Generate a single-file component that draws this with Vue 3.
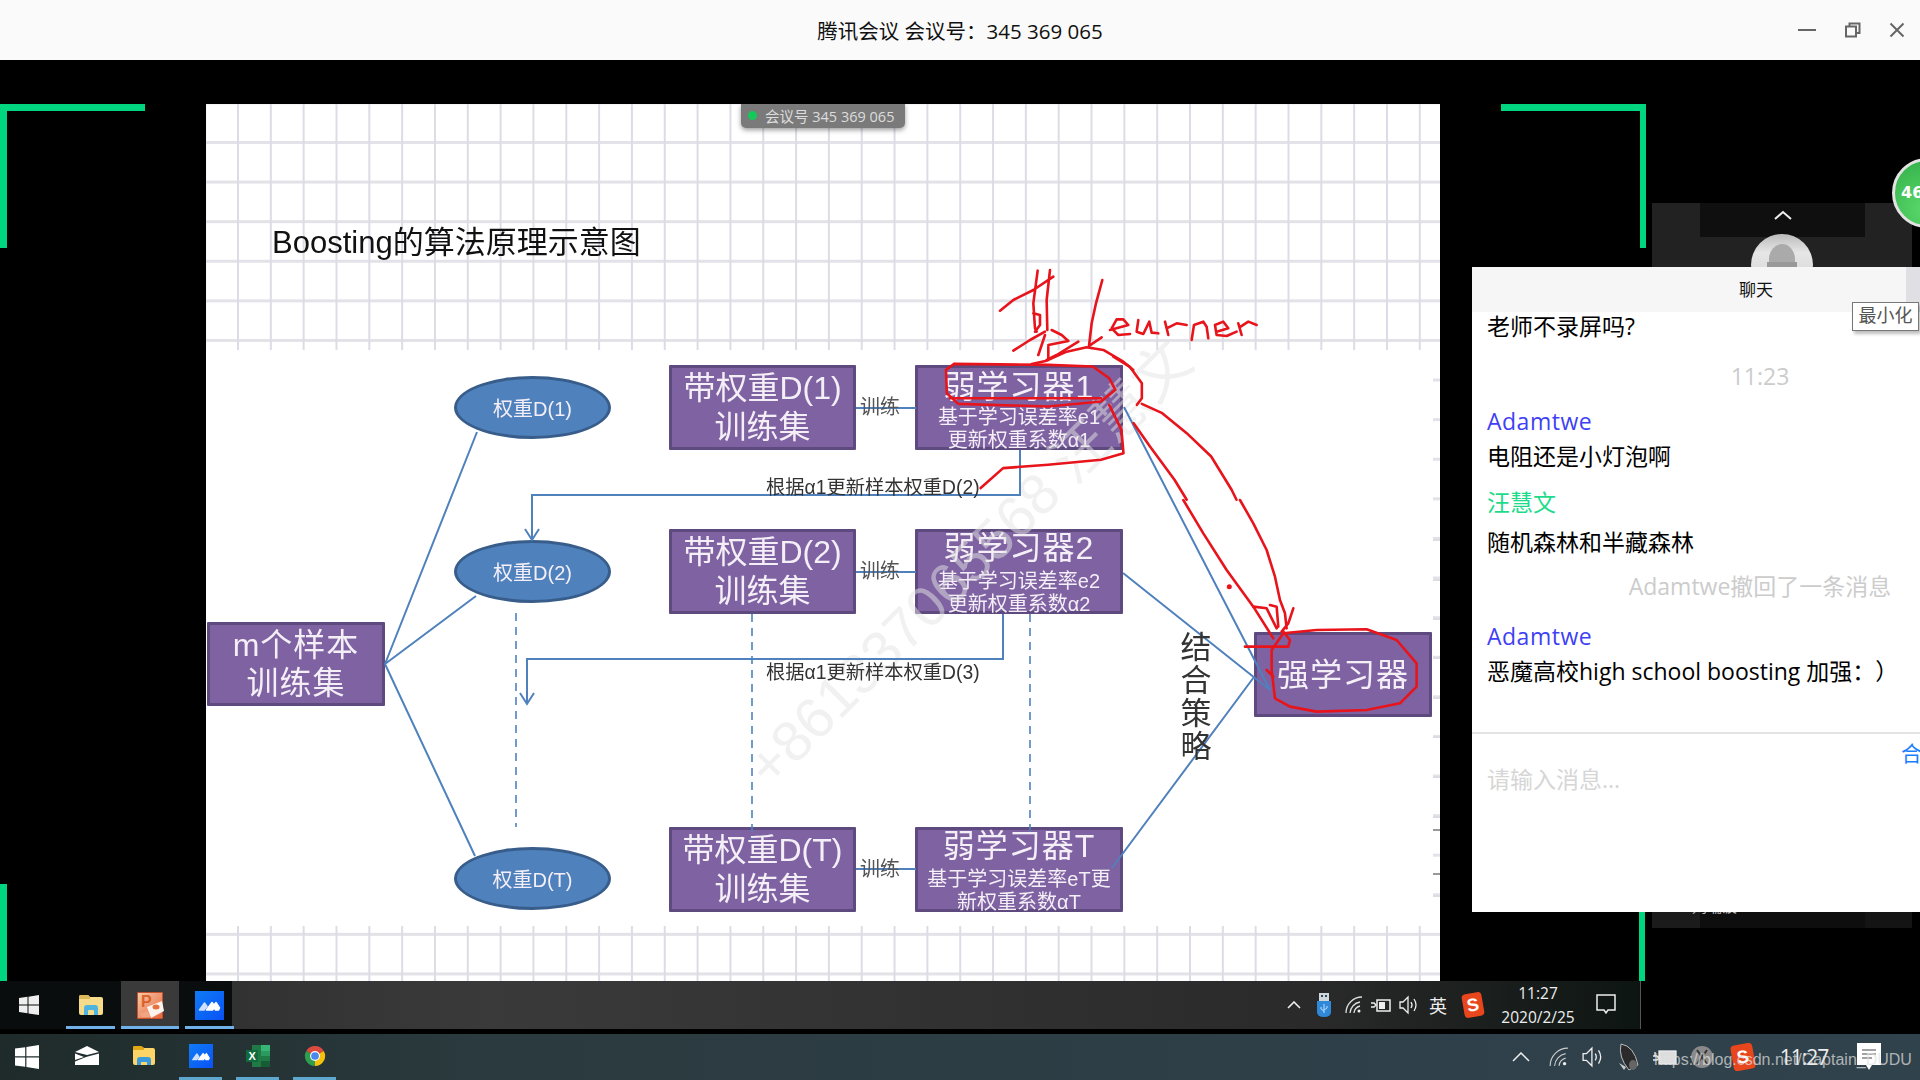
<template>
  <div class="screen">
    <header class="titlebar">
      <span class="title">腾讯会议 会议号：345 369 065</span>
      <div class="win-btns">
        <svg width="20" height="16" viewBox="0 0 20 16"><path d="M1 8h18" stroke="#666" stroke-width="2" /></svg>
        <svg width="16" height="16" viewBox="0 0 16 16" fill="none" stroke="#666" stroke-width="2"><rect x="1" y="4.500" width="10" height="10" /><path d="M4.500 4V1.500H14.500V11H11.500" /></svg>
        <svg width="16" height="16" viewBox="0 0 16 16"><path d="M1.500 1.500l13 13M14.500 1.500l-13 13" stroke="#666" stroke-width="2" /></svg>
      </div>
    </header>

    <main class="stage">
      <div class="bracket tl"></div>
      <div class="bracket tr"></div>
      <div class="edge bl"></div>
      <div class="edge br"></div>

      <section class="slide">
        <h1 class="slide-title">Boosting的算法原理示意图</h1>
        <div class="diagram-bg"></div>

        <div class="node box box-m"><span>m个样本</span><span>训练集</span></div>
        <div v-for="n in ellipses" :key="n.cls" class="node ellipse" :class="n.cls">{{ n.text }}</div>
        <div v-for="r in rows" :key="r.cls" class="node box box-set" :class="r.cls">
          <span>{{ r.set }}</span><span>训练集</span>
        </div>
        <div v-for="r in rows" :key="r.cls + 'w'" class="node box box-weak" :class="[r.cls, r.up ? 'up' : '']">
          <div class="weak-title">{{ r.weak }}</div>
          <div class="weak-sub">{{ r.sub1 }}</div>
          <div class="weak-sub">{{ r.sub2 }}</div>
        </div>
        <div class="node box box-strong">强学习器</div>

        <div class="watermark">+861337065568 汪慧文</div>

        <svg class="wires" width="1234" height="877" viewBox="206 104 1234 877" fill="none">
          <g stroke="#4f81bd" stroke-width="2">
            <path d="M385 664L477 432M385 664L476 596M385 664L475 856" />
            <path d="M856 408H916M856 572H916M856 869H916" />
            <path d="M1020 450V495H532V539M525 529L532 540L539 529" />
            <path d="M1003 614V659H527V704M520 693L527 704L534 693" />
            <path d="M1124 407L1270 690M1123 573L1270 690M1112 868L1254 677" />
            <path d="M516 613V827M752 614V840M1030 614V835" stroke-width="1.600" stroke-dasharray="8 6" />
          </g>
          <circle cx="1229.300" cy="586.700" r="2.500" fill="#e8141c" />
          <g stroke="#e8141c" stroke-width="2.600" stroke-linejoin="round" stroke-linecap="round">
            <!-- 基 + Learner handwriting -->
            <g transform="translate(990 260) scale(.3333)">
              <path vector-effect="non-scaling-stroke" d="M143 32L130 130L135 205L140 215M180 30L170 120L172 210M30 152L70 120L130 90L190 50M130 160L150 165L150 195L135 215M70 272L120 240L165 215M165 225L145 285M185 210L215 225L235 243L175 255M265 245L200 285L170 300M175 260L175 300" />
              <path vector-effect="non-scaling-stroke" d="M125 312L170 302L230 275L290 262L340 270L400 305L430 330" />
              <path vector-effect="non-scaling-stroke" d="M337 60L318 130L305 190L297 258L335 232" />
              <path vector-effect="non-scaling-stroke" d="M360 210L415 195L400 178L380 178L365 205L385 225L420 222M445 180L440 215L460 222L478 185L485 218L505 220M525 185L535 225M530 205L560 190L590 195M605 240L612 195L640 185L650 200L655 235M680 215L715 205L700 185L675 195L680 225L710 228L740 215M745 190L755 225M752 200L775 185L800 195" />
            </g>
            <!-- loop round 弱学习器1 and the two long strokes -->
            <g transform="translate(640 250) scale(.408 .333)">
              <path vector-effect="non-scaling-stroke" d="M770 342L1000 345L1110 350L1150 385L1165 420L1130 455L1000 470L780 462L752 430L750 360L770 342M760 445L1130 445" />
              <path vector-effect="non-scaling-stroke" d="M1150 465L1180 540L1185 610L1130 630L1000 645L890 655L835 715" />
              <path vector-effect="non-scaling-stroke" d="M1160 320L1200 350L1230 400L1230 445L1218 465" />
              <path vector-effect="non-scaling-stroke" d="M1230 462L1280 490L1340 550L1400 620L1450 720L1462 750" />
              <path vector-effect="non-scaling-stroke" d="M1210 520L1250 590L1310 690L1340 750" />
            </g>
            <g transform="translate(1000 500) scale(.3333)">
              <path vector-effect="non-scaling-stroke" d="M720 0L760 70L800 150L825 230L840 300L855 340L860 385M880 325L865 370L845 395M810 315L830 320L835 380M760 320L800 325L830 385" />
              <path vector-effect="non-scaling-stroke" d="M550 0L610 100L680 210L760 320L820 415M735 440L865 440L870 420L850 395" />
              <path vector-effect="non-scaling-stroke" d="M850 400L950 390L1100 388L1190 420L1250 490L1250 560L1200 610L1100 630L950 635L870 620L825 595L815 510L815 450L850 400M800 510L820 530" />
            </g>
          </g>
        </svg>

        <span class="label train t1">训练</span>
        <span class="label train t2">训练</span>
        <span class="label train t3">训练</span>
        <span class="label update u1">根据α1更新样本权重D(2)</span>
        <span class="label update u2">根据α1更新样本权重D(3)</span>
        <span class="label strategy">结合策略</span>
        <div class="ticks">
          <i v-for="t in ticks" :key="t" :class="{ dark: t > 820 && t < 880 }" :style="{ top: t - 350 + 'px' }"></i>
        </div>
      </section>

      <div class="meeting-tag"><i></i>会议号 345 369 065</div>

      <aside class="thumbs">
        <div class="thumb-head">
          <svg width="18" height="10" viewBox="0 0 18 10" fill="none"><path d="M1 9l8-7 8 7" stroke="#eee" stroke-width="2" /></svg>
        </div>
        <div class="avatar"><span class="avatar-head"></span><span class="avatar-body"></span></div>
        <div class="thumb-foot">
          <svg width="16" height="16" viewBox="0 0 16 16" fill="none"><circle cx="8" cy="8" r="6" stroke="#bbb" stroke-width="2" /><path d="M2 14L14 3" stroke="#d33" stroke-width="2" /></svg>
          <span>刘瑞波</span>
        </div>
      </aside>

      <div class="badge"><span>46</span></div>

      <section class="chat">
        <div class="chat-head">
          <span>聊天</span>
          <i class="chat-side"></i>
          <div class="tip">最小化</div>
        </div>
        <div class="chat-body">
          <div
            v-for="(m, i) in messages"
            :key="i"
            class="msg"
            :class="m.kind"
            :style="{ marginTop: m.gap + 'px' }"
          >{{ m.text }}</div>
        </div>
        <div class="chat-input">
          <span class="collapse">合</span>
          <span class="placeholder">请输入消息...</span>
        </div>
      </section>
    </main>

    <footer class="bar-inner">
      <div class="inner-apps">
        <div class="slot start">
          <svg width="20" height="20" viewBox="0 0 20 20" fill="#eee"><path d="M0 3l8.500-1.200v7.600H0zM9.500 1.700L20 0v9.400H9.500zM0 10.500h8.500v7.700L0 17zM9.500 10.500H20V20L9.500 18.400z" /></svg>
        </div>
        <div class="slot lit">
          <svg width="26" height="22" viewBox="0 0 26 22"><path d="M1 3q0-2 2-2h7l2 2h11q2 0 2 2v14q0 2-2 2H3q-2 0-2-2z" fill="#f6dc8a" /><path d="M1 3q0-2 2-2h7l2 2v2H1z" fill="#dcb858" /><path d="M6 21v-7q0-3 3-3h8q3 0 3 3v7h-4v-4q0-1-1-1h-4q-1 0-1 1v4z" fill="#4fb3e0" /></svg>
        </div>
        <div class="slot lit active">
          <svg width="27" height="27" viewBox="0 0 27 27"><defs><linearGradient id="pp" x1="0" y1="0" x2="1" y2="1"><stop offset="0" stop-color="#f7c9a8" /><stop offset="1" stop-color="#e8663a" /></linearGradient></defs><rect width="26" height="27" rx="1" fill="#c9502c" /><rect x="1" y="1" width="24" height="25" fill="url(#pp)" /><text x="4" y="15" class="ppt-p">P</text><path d="M10 15l15-6 2 10-13 7z" fill="#fbf3ee" /><ellipse cx="19" cy="15" rx="3.500" ry="2.500" fill="#e8703f" /><path d="M3 22l7-3 4 6H5z" fill="#f0a583" /></svg>
        </div>
        <div class="slot lit">
          <svg width="29" height="29" viewBox="0 0 29 29"><defs><linearGradient id="mg1" x1="0" y1="0" x2="1" y2="1"><stop offset="0" stop-color="#0f7cf5" /><stop offset="1" stop-color="#0a52f5" /></linearGradient></defs><rect width="29" height="29" fill="url(#mg1)" /><path d="M4.500 19l5-7 2.500 3.500-3 3.500z" fill="#cfe0ff" stroke="#cfe0ff" stroke-width="1.500" stroke-linejoin="round" /><path d="M11.500 19l5.500-7.500 2 2.500 2-2.500 3.500 5.500-1 2h-3l-1.500-2.500-1.500 2.500z" fill="#fff" stroke="#fff" stroke-width="1.500" stroke-linejoin="round" /></svg>
        </div>
      </div>
      <div class="inner-tray">
        <svg width="14" height="8" viewBox="0 0 14 8" fill="none"><path d="M1 7l6-6 6 6" stroke="#eee" stroke-width="1.600" /></svg>
        <svg width="16" height="24" viewBox="0 0 16 24"><rect x="3" y="0" width="10" height="8" fill="#cfd8dc" /><rect x="5" y="2" width="2" height="2" fill="#345" /><rect x="9" y="2" width="2" height="2" fill="#345" /><path d="M1 8h14v11q0 5-7 5t-7-5z" fill="#2f88d8" /><path d="M8 11v9M5 14v2l3 2M11 13v2l-3 2" stroke="#bfe0ff" fill="none" /></svg>
        <svg width="18" height="18" viewBox="0 0 18 18" fill="none" stroke="#ddd" stroke-width="1.300"><path d="M1 17A16 16 0 0 1 17 1M5 17A12 12 0 0 1 15 6M9 17a8 8 0 0 1 6-7" /><circle cx="14" cy="15" r="1.500" fill="#eee" stroke="none" /></svg>
        <svg width="20" height="16" viewBox="0 0 20 16" fill="none" stroke="#eee" stroke-width="1.500"><rect x="6" y="3" width="13" height="11" /><rect x="8" y="5" width="6" height="7" fill="#eee" stroke="none" /><path d="M0 6h3l2 2-2 2H0" /></svg>
        <svg width="20" height="20" viewBox="0 0 20 20" fill="none" stroke="#eee" stroke-width="1.300"><path d="M1 7v6h3l5 5V2L4 7z" /><path d="M12 7q2 3 0 6M15 4q4 6 0 12" /></svg>
        <span class="ime">英</span>
        <div class="sogou"><span>S</span></div>
        <div class="clock"><span>11:27</span><span>2020/2/25</span></div>
        <svg width="20" height="22" viewBox="0 0 20 22" fill="none" stroke="#eee" stroke-width="1.500"><path d="M1 1h18v15h-7l-2 3-2-3H1z" /></svg>
      </div>
    </footer>
    <div class="bar-gap"></div>
    <footer class="bar-host">
      <div class="host-apps">
        <div class="slot start">
          <svg width="24" height="24" viewBox="0 0 20 20" fill="#fff"><path d="M0 3l8.500-1.200v7.600H0zM9.500 1.700L20 0v9.400H9.500zM0 10.500h8.500v7.700L0 17zM9.500 10.500H20V20L9.500 18.400z" /></svg>
        </div>
        <div class="slot">
          <svg width="24" height="19" viewBox="0 0 24 19" fill="#fff"><path d="M0 6L12 0l12 6-12 3z" /><path d="M0 7.500L9 11 0 14zM24 7.500V19H0v-3.500l11-4.500z" /></svg>
        </div>
        <div class="slot">
          <svg width="22" height="19" viewBox="0 0 22 19"><path d="M0 2q0-2 2-2h6l3 2h9q2 0 2 2v13q0 2-2 2H2q-2 0-2-2z" fill="#fcd566" /><path d="M0 2q0-2 2-2h6l3 2v2H0z" fill="#e2a813" /><path d="M4 19v-5q0-3 3-3h8q3 0 3 3v5h-4v-3h-6v3z" fill="#3c9bdc" /></svg>
        </div>
        <div class="slot on">
          <svg width="24" height="24" viewBox="0 0 29 29"><defs><linearGradient id="mg2" x1="0" y1="0" x2="1" y2="1"><stop offset="0" stop-color="#0f7cf5" /><stop offset="1" stop-color="#0a52f5" /></linearGradient></defs><rect width="29" height="29" fill="url(#mg2)" /><path d="M4.500 19l5-7 2.500 3.500-3 3.500z" fill="#cfe0ff" stroke="#cfe0ff" stroke-width="1.500" stroke-linejoin="round" /><path d="M11.500 19l5.500-7.500 2 2.500 2-2.500 3.500 5.500-1 2h-3l-1.500-2.500-1.500 2.500z" fill="#fff" stroke="#fff" stroke-width="1.500" stroke-linejoin="round" /></svg>
        </div>
        <div class="slot on">
          <svg width="24" height="22" viewBox="0 0 24 22"><rect x="6" y="0" width="18" height="22" fill="#1f7a45" /><rect x="15" y="0" width="9" height="6" fill="#37b574" /><rect x="15" y="6" width="9" height="5" fill="#2a9a5e" /><rect x="15" y="16" width="9" height="6" fill="#185c36" /><rect x="0" y="5" width="12" height="12" fill="#0f6b3c" /><text x="2.500" y="15" class="xls-x">X</text></svg>
        </div>
        <div class="slot on">
          <svg width="22" height="22" viewBox="0 0 24 24"><path d="M12 12L2.470 6.500A11 11 0 0 1 21.530 6.500z" fill="#dd4b3e" /><path d="M12 12L21.530 6.500A11 11 0 0 1 12 23z" fill="#f4c20d" /><path d="M12 12L12 23A11 11 0 0 1 2.470 6.500z" fill="#2f9e4f" /><circle cx="12" cy="12" r="5.400" fill="#fff" /><circle cx="12" cy="12" r="4.200" fill="#4a87ee" /></svg>
        </div>
      </div>
      <div class="host-tray">
        <svg width="18" height="10" viewBox="0 0 18 10" fill="none"><path d="M1 9l8-8 8 8" stroke="#eee" stroke-width="1.500" /></svg>
        <svg width="20" height="20" viewBox="0 0 18 18" fill="none" stroke="#ccc" stroke-width="1"><path d="M1 17A16 16 0 0 1 17 1M5 17A12 12 0 0 1 15 6M9 17a8 8 0 0 1 6-7" /><circle cx="14" cy="15" r="1.500" fill="#eee" stroke="none" /></svg>
        <svg width="22" height="22" viewBox="0 0 20 20" fill="none" stroke="#eee" stroke-width="1.200"><path d="M1 7v6h3l5 5V2L4 7z" /><path d="M12 7q2 3 0 6M15 4q4 6 0 12" /></svg>
        <svg width="24" height="28" viewBox="0 0 24 28"><path d="M5 1Q18 3 22 22L13 27Q2 14 5 1z" fill="#2a2a2a" stroke="#bbb" /><ellipse cx="17" cy="22" rx="4" ry="5" fill="#666" /><path d="M3 20l7 4-2 3z" fill="#ccc" /></svg>
        <svg width="24" height="18" viewBox="0 0 24 18" fill="none" stroke="#eee" stroke-width="1.300"><rect x="6" y="3" width="17" height="13" fill="#ddd" /><path d="M0 8h4l2 2-2 2H0M2 8V4" /></svg>
        <svg width="24" height="24" viewBox="0 0 24 24"><circle cx="12" cy="12" r="11" fill="#8a8a8a" /><path d="M7 5l10 14M17 5L7 19" stroke="#333" stroke-width="2" /></svg>
        <div class="sogou big"><span>S</span></div>
        <span class="host-time">11:27</span>
        <svg width="24" height="28" viewBox="0 0 24 28"><path d="M0 0h24v22h-9l-3 5-3-5H0z" fill="#fff" /><path d="M5 7h14M5 11h14M5 15h10" stroke="#444" /></svg>
      </div>
      <span class="url-mark">https://blog.csdn.net/Captain_DUDU</span>
    </footer>
  </div>
</template>

<script setup>
const rows = [
  { cls: 'r1', set: '带权重D(1)', weak: '弱学习器1', sub1: '基于学习误差率e1', sub2: '更新权重系数α1', up: false },
  { cls: 'r2', set: '带权重D(2)', weak: '弱学习器2', sub1: '基于学习误差率e2', sub2: '更新权重系数α2', up: true },
  { cls: 'r3', set: '带权重D(T)', weak: '弱学习器T', sub1: '基于学习误差率eT更', sub2: '新权重系数αT', up: true }
];

const ellipses = [
  { cls: 'e1', text: '权重D(1)' },
  { cls: 'e2', text: '权重D(2)' },
  { cls: 'e3', text: '权重D(T)' }
];

const ticks = [539, 579, 618, 657, 697, 736, 776, 816, 829, 873, 895];

const messages = [
  { kind: 'plain', gap: -1, text: '老师不录屏吗?' },
  { kind: 'sys', gap: 20, text: '11:23' },
  { kind: 'blue', gap: 15, text: 'Adamtwe' },
  { kind: 'plain', gap: 5, text: '电阻还是小灯泡啊' },
  { kind: 'green', gap: 16, text: '汪慧文' },
  { kind: 'plain', gap: 10, text: '随机森林和半藏森林' },
  { kind: 'sys', gap: 14, text: 'Adamtwe撤回了一条消息' },
  { kind: 'blue', gap: 20, text: 'Adamtwe' },
  { kind: 'plain', gap: 5, text: '恶魔高校high school boosting 加强：）' }
];
</script>

<style>
html,
body {
  margin: 0;
  background: #000;
}
</style>

<style scoped>
.screen {
  position: relative;
  width: 1920px;
  height: 1080px;
  overflow: hidden;
  display: flex;
  flex-direction: column;
  background: #000;
  font-family: "Open Sans", "Noto Sans CJK SC", sans-serif;
}

/* title bar */
.titlebar {
  position: relative;
  height: 60px;
  flex: none;
  background: #fafafa;
  display: flex;
  align-items: center;
  justify-content: center;
}

.title {
  font-size: 20.500px;
  color: #111;
}

.win-btns {
  position: absolute;
  right: 15px;
  top: 22px;
  display: flex;
  align-items: center;
  gap: 28px;
}

/* stage */
.stage {
  position: relative;
  flex: 1;
  min-height: 0;
  padding: 44px 0 0 206px;
}

.bracket {
  position: absolute;
  top: 44px;
  width: 145px;
  height: 144px;
  box-sizing: border-box;
  border-top: 7px solid #00d67f;
}

.bracket.tl {
  left: 0;
  border-left: 7px solid #00d67f;
}

.bracket.tr {
  left: 1501px;
  border-right: 6px solid #00d67f;
}

.edge {
  position: absolute;
  bottom: 0;
  height: 97px;
  background: #00d67f;
}

.edge.bl {
  left: 0;
  width: 7px;
}

.edge.br {
  left: 1639px;
  width: 6px;
}

/* slide */
.slide {
  position: relative;
  width: 1234px;
  height: 877px;
  background-color: #fff;
  background-image:
    linear-gradient(to right, #dcdce6 2px, transparent 2px),
    linear-gradient(to bottom, #e2e2e8 3px, transparent 3px);
  background-size: 32.830px 100%, 100% 39.600px;
  background-position: 31px 0, 0 37px;
  font-family: "Liberation Sans", "Noto Sans CJK SC", sans-serif;
  filter: blur(0.4px);
}

.slide-title {
  position: absolute;
  left: 66px;
  top: 119px;
  margin: 0;
  font-size: 31px;
  line-height: 40px;
  font-weight: 400;
  color: #111;
  white-space: nowrap;
}

.diagram-bg {
  position: absolute;
  left: 0;
  top: 246px;
  width: 1227px;
  height: 576px;
  background: #fff;
}

.ticks i {
  position: absolute;
  left: 1227px;
  width: 7px;
  height: 2px;
  margin-top: 246px;
  background: #dcdce2;
}

.ticks i.dark {
  background: #999;
}

.node {
  position: absolute;
  box-sizing: border-box;
  color: #f4eff7;
  text-align: center;
}

.box {
  background: #7f62a1;
  border: 3px solid #5e4a7e;
  border-radius: 1px;
  display: flex;
  flex-direction: column;
  align-items: center;
}

.box-m {
  left: 1px;
  top: 518px;
  width: 178px;
  height: 84px;
  justify-content: center;
  font-size: 32px;
  line-height: 38px;
  letter-spacing: 1px;
}

.box-set {
  left: 463px;
  width: 187px;
  height: 85px;
  justify-content: center;
  font-size: 32px;
  line-height: 39px;
  white-space: nowrap;
}

.box-weak {
  left: 709px;
  width: 208px;
  height: 85px;
  white-space: nowrap;
}

.r1 { top: 261px; }
.r2 { top: 425px; }
.r3 { top: 723px; }

.weak-title {
  font-size: 32px;
  line-height: 38px;
  letter-spacing: 1px;
}

.up .weak-title {
  margin-top: -3px;
  margin-bottom: 3px;
}

.weak-sub {
  font-size: 20px;
  line-height: 23px;
}

.box-strong {
  left: 1048px;
  top: 528px;
  width: 178px;
  height: 85px;
  justify-content: center;
  font-size: 32px;
  letter-spacing: 1px;
  padding-bottom: 5px;
}

.ellipse {
  left: 248px;
  width: 157px;
  height: 63px;
  border-radius: 50%;
  background: #4f81bd;
  border: 3px solid #385d8a;
  display: flex;
  align-items: center;
  justify-content: center;
  font-size: 20px;
}

.e1 { top: 272px; }
.e2 { top: 436px; }
.e3 { top: 743px; }

.wires {
  position: absolute;
  left: 0;
  top: 0;
  pointer-events: none;
}

.label {
  position: absolute;
  white-space: nowrap;
  color: #333;
}

.train {
  left: 654px;
  font-size: 20px;
  line-height: 26px;
  color: #555;
}

.t1 { top: 290px; }
.t2 { top: 454px; }
.t3 { top: 752px; }

.update {
  left: 560px;
  font-size: 19.300px;
  line-height: 24px;
}

.u1 { top: 372px; }
.u2 { top: 557px; }

.strategy {
  left: 974px;
  top: 527px;
  width: 32px;
  font-size: 31px;
  line-height: 33px;
  white-space: normal;
  text-align: center;
}

.watermark {
  position: absolute;
  left: 457px;
  top: 415px;
  width: 640px;
  font-size: 57px;
  line-height: 60px;
  white-space: nowrap;
  color: rgba(228, 228, 228, 0.5);
  transform: rotate(-45deg);
  transform-origin: center;
  pointer-events: none;
}

.meeting-tag {
  position: absolute;
  left: 741px;
  top: 44px;
  width: 164px;
  height: 24px;
  box-sizing: border-box;
  padding: 0 0 2px 7px;
  display: flex;
  align-items: center;
  gap: 8px;
  background: #7a7a7a;
  border-radius: 0 0 5px 5px;
  box-shadow: 0 2px 5px rgba(0, 0, 0, 0.4);
  color: #ddd;
  font-size: 14.500px;
  white-space: nowrap;
}

.meeting-tag i {
  width: 9px;
  height: 9px;
  border-radius: 50%;
  background: #14c85a;
  flex: none;
}

/* participant strip */
.thumbs {
  position: absolute;
  left: 1652px;
  top: 143px;
  width: 260px;
  height: 725px;
  background: #222;
}

.thumb-head {
  width: 165px;
  height: 34px;
  margin-left: 48px;
  background: #0f0f0f;
  display: flex;
  justify-content: center;
  align-items: flex-start;
  padding-top: 7px;
  box-sizing: border-box;
}

.avatar {
  position: absolute;
  left: 99px;
  top: 31px;
  width: 62px;
  height: 62px;
  border-radius: 50%;
  background: linear-gradient(#bbb, #e6e6e6 30%, #d0d0d0);
  overflow: hidden;
}

.avatar-head {
  position: absolute;
  left: 18px;
  top: 10px;
  width: 26px;
  height: 30px;
  border-radius: 50% 50% 30% 30%;
  background: #aaa;
}

.avatar-body {
  position: absolute;
  left: 16px;
  top: 28px;
  width: 30px;
  height: 14px;
  background: #999;
}

.thumb-foot {
  position: absolute;
  left: 0;
  bottom: 0;
  width: 100%;
  height: 32px;
  box-sizing: border-box;
  padding-left: 18px;
  display: flex;
  align-items: flex-start;
  gap: 6px;
  color: #bbb;
  font-size: 15px;
  line-height: 20px;
  background: linear-gradient(to right, #1b1b1b 48px, #0e0e0e 48px, #0e0e0e 213px, #141414 213px);
}

.badge {
  position: absolute;
  left: 1892px;
  top: 98px;
  width: 70px;
  height: 70px;
  box-sizing: border-box;
  border: 3px solid #e3e3e3;
  border-radius: 50%;
  background: radial-gradient(circle at 45% 75%, #5ad86a, #2fab45);
  color: #fff;
  font: 700 16px "DejaVu Sans", sans-serif;
  line-height: 64px;
  padding-left: 6px;
}

/* chat */
.chat {
  position: absolute;
  left: 1472px;
  top: 207px;
  width: 576px;
  height: 645px;
  background: #fff;
  display: flex;
  flex-direction: column;
  color: #000;
}

.chat-head {
  position: relative;
  height: 45px;
  flex: none;
  background: #f6f6f6;
  box-sizing: border-box;
  padding-right: 8px;
  text-align: center;
  font-size: 17px;
  line-height: 45px;
  color: #111;
}

.chat-side {
  position: absolute;
  left: 434px;
  top: 0;
  width: 142px;
  height: 100%;
  background: #e0e0e4;
}

.tip {
  position: absolute;
  left: 380px;
  top: 35px;
  width: 67px;
  height: 29px;
  box-sizing: border-box;
  border: 1px solid #777;
  background: #fff;
  box-shadow: 2px 3px 3px rgba(0, 0, 0, 0.25);
  color: #555;
  font-size: 18px;
  line-height: 25px;
}

.chat-body {
  height: 420px;
  flex: none;
  padding: 0 15px;
  overflow: hidden;
  box-sizing: border-box;
}

.msg {
  font-size: 23px;
  line-height: 30px;
  white-space: nowrap;
  text-spacing-trim: space-all;
}

.msg.sys {
  text-align: center;
  color: #ccc;
}

.msg.blue {
  color: #3f3ff5;
  letter-spacing: 0.5px;
}

.msg.green {
  color: #1edb8c;
}

.chat-input {
  position: relative;
  flex: 1;
  border-top: 2px solid #e3e3e3;
  padding: 30px 15px 0;
  font-size: 23px;
  line-height: 30px;
}

.placeholder {
  color: #d6d6d6;
}

.collapse {
  position: absolute;
  left: 429px;
  top: 4px;
  color: #1a7fff;
  font-size: 21px;
}

/* inner taskbar */
.bar-inner {
  position: relative;
  width: 1640px;
  height: 48px;
  flex: none;
  display: flex;
  justify-content: space-between;
  background: linear-gradient(to right, #2a2a2a 0, #3a3a3a 30%, #2a2a2a 80%, #0d1512 100%);
  border-right: 1px solid #555;
}

.inner-apps {
  display: flex;
  background: linear-gradient(to right, #0a0d0d 232px, transparent 232px);
}

.slot {
  display: flex;
  align-items: center;
  justify-content: center;
  box-sizing: border-box;
}

.inner-apps .slot {
  width: 49px;
  height: 48px;
  margin-right: 6px;
  border-bottom: 3px solid transparent;
  padding-top: 3px;
}

.inner-apps .slot.start {
  width: 66px;
  margin-right: 0;
  padding-right: 8px;
  border: 0;
  padding-top: 0;
}

.inner-apps .slot.lit {
  border-bottom-color: #6fb1e8;
}

.inner-apps .slot.active {
  width: 58px;
  background: #3a3a3a;
}

.ppt-p {
  font: 700 16px "Liberation Sans", sans-serif;
  fill: #d9622b;
}

.inner-tray {
  display: grid;
  grid-template-columns: 28px 32px 28px 26px 30px 28px 42px 88px 48px;
  align-items: center;
  justify-items: center;
  padding-right: 10px;
  color: #eee;
}

.ime {
  font-size: 18px;
}

.sogou {
  width: 20px;
  height: 24px;
  border-radius: 4px;
  background: #e8461c;
  transform: rotate(-10deg);
  display: flex;
  align-items: center;
  justify-content: center;
}

.sogou span {
  font: 700 18px "Liberation Sans", sans-serif;
  color: #fff;
}

.sogou.big {
  width: 22px;
  height: 26px;
}

.clock {
  display: flex;
  flex-direction: column;
  align-items: center;
  font-family: "Open Sans", sans-serif;
  font-size: 15.500px;
  line-height: 24px;
  white-space: nowrap;
}

.bar-gap {
  height: 5px;
  flex: none;
}

/* host taskbar */
.bar-host {
  position: relative;
  height: 46px;
  flex: none;
  display: flex;
  justify-content: space-between;
  background: linear-gradient(to right, #1f2b2a, #2a3a3e 25%, #2f404a 75%, #30424b);
}

.host-apps {
  display: flex;
  padding-left: 15px;
}

.host-apps .slot {
  width: 43px;
  height: 46px;
  margin-right: 14px;
  border-bottom: 3px solid transparent;
}

.host-apps .slot.start {
  width: 24px;
  margin-right: 26px;
  border: 0;
}

.host-apps .slot.on {
  border-bottom-color: #5ea8cf;
}

.xls-x {
  font: 700 11px "Liberation Sans", sans-serif;
  fill: #fff;
}

.host-tray {
  display: grid;
  grid-template-columns: 38px 38px 30px 40px 34px 40px 42px 80px 50px;
  align-items: center;
  justify-items: center;
  padding-right: 26px;
}

.host-time {
  font-size: 21px;
  letter-spacing: -1px;
  color: #eee;
  white-space: nowrap;
}

.url-mark {
  position: absolute;
  left: 1654px;
  top: 15px;
  font: 16px/22px "Liberation Sans", sans-serif;
  color: rgba(225, 225, 225, 0.72);
  white-space: nowrap;
}
</style>
